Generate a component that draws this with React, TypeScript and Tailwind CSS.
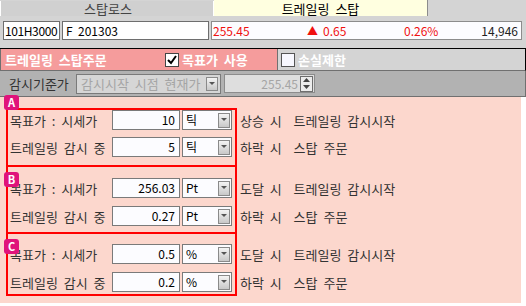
import React from "react";

const font = { fontFamily: '"Noto Sans CJK KR", "Noto Sans", sans-serif' };

function DropBtn({ className = "" }: { className?: string }) {
  return (
    <div className={`shrink-0 flex items-center justify-center bg-gradient-to-b from-[#f4f4f4] to-[#c8c8c8] border border-[#8a8a8a] ${className}`}>
      <svg width="6" height="4" viewBox="0 0 6 4">
        <path d="M0 0 H6 L3 3 Z" fill="#555" />
      </svg>
    </div>
  );
}

function Row({ label, value, unit, desc }: { label: string; value: string; unit: string; desc: string }) {
  return (
    <div className="flex items-center w-max h-[20px] whitespace-pre text-[13px] text-[#333] leading-none [word-spacing:3px]">
      <div className="shrink-0 w-[104px] pl-[2px]">{label}</div>
      <div className="shrink-0 w-[68px] h-[20px] bg-[#fcfcff] border border-[#7a7a7a] flex items-center justify-end pr-[4px] text-[12px] text-black">
        {value}
      </div>
      <div className="shrink-0 ml-[2px] w-[50px] h-[20px] bg-[#fcfcff] border border-[#7a7a7a] flex items-center pl-[3px] pr-[1px] text-[12px] text-black">
        <span className="flex-1">{unit}</span>
        <DropBtn className="w-[12px] h-[15px]" />
      </div>
      <div className="shrink-0 ml-[8px]">{desc}</div>
    </div>
  );
}

function Badge({ letter, className }: { letter: string; className: string }) {
  return (
    <div className={`absolute z-10 w-[15px] h-[15px] rounded-[3px] bg-[#e0137b] text-white text-[11px] font-bold flex items-center justify-center leading-none ${className}`}>
      {letter}
    </div>
  );
}

export default function App() {
  return (
    <div className="w-[526px] h-[306px] bg-white overflow-hidden flex flex-col" style={font}>
      {/* tabs */}
      <div className="flex shrink-0 h-[16px] bg-[#d4d4d4]">
        <div className="w-[214px] mt-[1px] bg-[#d0d0d0] border-l border-white border-r border-[#8c8c8c] text-[13px] text-[#444] flex items-center justify-center leading-none pl-[2px]">
          스탑로스
        </div>
        <div className="w-[214px] bg-[#ffffe0] border-r border-[#8c8c8c] text-[13px] text-black flex items-center justify-center leading-none [word-spacing:3px]">
          트레일링 스탑
        </div>
      </div>
      {/* symbol row */}
      <div className="h-[32px] shrink-0 bg-[#d4d4d4] flex items-start pt-[5px] pl-[3px] text-[12px]">
        <div className="w-[57px] h-[19px] bg-white border border-[#6e6e6e] flex items-center pl-[1px] leading-none tracking-[-0.4px] overflow-hidden">101H3000</div>
        <div className="ml-[2px] w-[147px] h-[19px] bg-white border border-[#6e6e6e] flex items-center pl-[3px] leading-none whitespace-pre">F  201303</div>
        <div className="ml-[2px] w-[311px] h-[19px] bg-[#fcfcff] border border-[#8c8c8c] flex items-center leading-none text-[#f01010]">
          <span className="w-[95px] pl-[1px]">255.45</span>
          <span className="w-[97px] flex items-center">
            <span className="text-[11px] mr-[5px]">▲</span>0.65
          </span>
          <span>0.26%</span>
          <span className="ml-auto pr-[3px] text-[#222]">14,946</span>
        </div>
      </div>
      {/* header bar */}
      <div className="flex shrink-0 h-[23px] border-t border-black border-r border-b border-b-[#707070] [word-spacing:3px]">
        <div className="w-[277px] bg-[#f59c9c] border-l border-[#707070] flex items-center text-white font-bold text-[13px] leading-none">
          <span className="pl-[4px] w-[164px]">트레일링 스탑주문</span>
          <span className="w-[14px] h-[14px] bg-white border border-[#444] flex items-center justify-center">
            <svg width="10" height="10" viewBox="0 0 10 10">
              <path d="M1 5 L4 8 L9 1" stroke="#000" strokeWidth="2" fill="none" />
            </svg>
          </span>
          <span className="ml-[3px]">목표가 사용</span>
        </div>
        <div className="flex-1 bg-[#d4d4d4] border-l border-[#707070] flex items-center text-white font-bold text-[13px] leading-none">
          <span className="ml-[3px] w-[14px] h-[14px] bg-[#f8f8ff] border border-[#555]" />
          <span className="ml-[3px]">손실제한</span>
        </div>
      </div>
      {/* monitoring base row */}
      <div className="h-[26px] shrink-0 bg-[#b2b2b2] border-r border-b border-[#707070] flex items-center text-[13px] leading-none">
        <span className="pl-[9px] w-[76px] text-[#333]">감시기준가</span>
        <div className="w-[145px] h-[20px] bg-[#d6d6d6] border border-[#7a7a7a] flex items-center pl-[4px] pr-[2px] text-[#a5a5a5] [word-spacing:3px]">
          <span className="flex-1 whitespace-pre">감시시작 시점 현재가</span>
          <DropBtn className="w-[12px] h-[14px]" />
        </div>
        <div className="ml-[3px] w-[91px] h-[19px] bg-[#dedede] border border-[#8c8c8c] flex items-center justify-end pr-[1px] text-[12px] text-[#a5a5a5]">
          <span className="mr-[2px]">255.45</span>
          <div className="w-[13px] h-[16px] border border-[#6e6e6e] bg-[#ececec] flex flex-col items-center justify-around">
            <svg width="7" height="4" viewBox="0 0 7 4"><path d="M0 4 H7 L3.5 0 Z" fill="#444" /></svg>
            <svg width="7" height="4" viewBox="0 0 7 4"><path d="M0 0 H7 L3.5 4 Z" fill="#444" /></svg>
          </div>
        </div>
      </div>
      {/* groups */}
      <div className="w-[521px] h-[206px] shrink-0 bg-[#fcd7cd] pt-[11px] pl-[6px]">
        <div className="relative w-[231px] h-[59px] border-2 border-[#ff0000]">
          <Badge letter="A" className="-left-[4px] -top-[15px]" />
          <div className="flex flex-col gap-[7px]">
            <Row label="목표가 : 시세가" value="10" unit="틱" desc="상승 시  트레일링 감시시작" />
            <Row label="트레일링 감시 중" value="5" unit="틱" desc="하락 시  스탑 주문" />
          </div>
        </div>
        <div className="relative -mt-[2px] w-[231px] h-[69px] border-2 border-[#ff0000] pt-[11px]">
          <Badge letter="B" className="-left-[4px] top-[5px]" />
          <div className="flex flex-col gap-[8px]">
            <Row label="목표가 : 시세가" value="256.03" unit="Pt" desc="도달 시  트레일링 감시시작" />
            <Row label="트레일링 감시 중" value="0.27" unit="Pt" desc="하락 시  스탑 주문" />
          </div>
        </div>
        <div className="relative -mt-[2px] w-[231px] h-[64px] border-2 border-[#ff0000] pt-[10px]">
          <Badge letter="C" className="-left-[4px] top-[5px]" />
          <div className="flex flex-col gap-[8px]">
            <Row label="목표가 : 시세가" value="0.5" unit="%" desc="도달 시  트레일링 감시시작" />
            <Row label="트레일링 감시 중" value="0.2" unit="%" desc="하락 시  스탑 주문" />
          </div>
        </div>
      </div>
    </div>
  );
}
